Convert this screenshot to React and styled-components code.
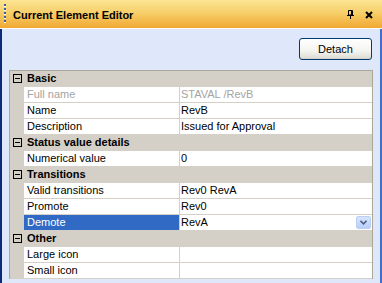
import React from 'react';
import styled, { createGlobalStyle } from 'styled-components';

const GlobalStyle = createGlobalStyle`
  html, body {
    margin: 0;
    padding: 0;
    background: #dfe8fb;
  }
  body {
    font-family: "Liberation Sans", Arial, sans-serif;
    font-size: 11px;
    color: #000;
  }
`;

const Window = styled.div`
  width: 382px;
  height: 283px;
  display: flex;
  flex-direction: column;
  overflow: hidden;
`;

const TitleBar = styled.div`
  height: 28px;
  flex: none;
  display: flex;
  align-items: center;
  background: linear-gradient(to bottom, #fbe594 0%, #f7cf6a 45%, #f1a832 100%);
  border-bottom: 1px solid #ffffff;
  padding: 0 9px 0 4px;
`;

const Grip = styled.div`
  width: 2px;
  height: 20px;
  margin-right: 7px;
  background: repeating-linear-gradient(
    to bottom,
    #3a5fa8 0px,
    #3a5fa8 2px,
    #ffffff 2px,
    #ffffff 3px,
    transparent 3px,
    transparent 4px
  );
`;

const Title = styled.div`
  flex: 1;
  font-weight: bold;
  font-size: 11px;
  padding-top: 1px;
`;

const TitleIcons = styled.div`
  display: flex;
  align-items: center;
  gap: 11px;
  padding-top: 1px;
`;

const Body = styled.div`
  flex: 1;
  background: #dfe8fb;
  border-left: 2px solid #0b2a78;
  border-right: 2px solid #3f6fc8;
  display: flex;
  flex-direction: column;
  padding: 9px 7px 0 7px;
`;

const Toolbar = styled.div`
  display: flex;
  justify-content: flex-end;
  padding-right: 1px;
  margin-bottom: 10px;
`;

const Button = styled.button`
  width: 73px;
  height: 22px;
  border: 1px solid #003c74;
  border-radius: 3px;
  background: linear-gradient(to bottom, #ffffff 0%, #f4f4f0 60%, #dcdad2 100%);
  font-family: "Liberation Sans", Arial, sans-serif;
  font-size: 11px;
  color: #000;
  padding: 0;
  box-shadow: inset 0 -1px 0 #d6d0c5;
`;

const Grid = styled.div`
  border: 1px solid #aca899;
  border-bottom: none;
  background: #d4d0c8;
`;

const Row = styled.div`
  display: grid;
  grid-template-columns: 14px 156px 1fr;
  height: 16px;
  box-sizing: border-box;
  border-bottom: 1px solid #d4d0c8;
  line-height: 15px;
`;

const Margin = styled.div`
  background: #d4d0c8;
  display: flex;
  align-items: center;
  justify-content: center;
`;

const Label = styled.div`
  background: ${p => (p.$selected ? '#316ac5' : '#ffffff')};
  color: ${p => (p.$selected ? '#ffffff' : p.$disabled ? '#a4a4a4' : '#000')};
  border-right: 1px solid #d4d0c8;
  padding-left: 3px;
  white-space: nowrap;
  overflow: hidden;
`;

const Value = styled.div`
  background: #ffffff;
  color: ${p => (p.$disabled ? '#a4a4a4' : '#000')};
  padding-left: 1px;
  display: flex;
  align-items: center;
  justify-content: space-between;
  white-space: nowrap;
`;

const Header = styled.div`
  display: grid;
  grid-template-columns: 14px 1fr;
  height: 16px;
  box-sizing: border-box;
  border-bottom: 1px solid #d4d0c8;
  background: #d4d0c8;
  font-weight: bold;
  line-height: 15px;
`;

const HeaderText = styled.div`
  padding-left: 3px;
`;

const MinusBox = styled.div`
  width: 7px;
  height: 7px;
  border: 1px solid #000;
  position: relative;
  &::after {
    content: '';
    position: absolute;
    left: 1px;
    right: 1px;
    top: 3px;
    height: 1px;
    background: #000;
  }
`;

const DropButton = styled.div`
  width: 15px;
  height: 13px;
  margin-right: 1px;
  border-radius: 2px;
  background: linear-gradient(to bottom, #d7e4fd 0%, #b9cffa 100%);
  border: 1px solid #bcd0f7;
  box-sizing: border-box;
  display: flex;
  align-items: center;
  justify-content: center;
`;

const PinIcon = () => (
  <svg width="7" height="9" viewBox="0 0 7 9">
    <path d="M1.5 0.5H5.5V5H1.5Z M4.5 1V5" fill="none" stroke="#000" strokeWidth="1" />
    <path d="M0 5.5H7" stroke="#000" strokeWidth="1" />
    <path d="M3.5 5.5V9" stroke="#000" strokeWidth="1" />
  </svg>
);

const CloseIcon = () => (
  <svg width="8" height="8" viewBox="0 0 8 8">
    <path d="M1 1L7 7M7 1L1 7" stroke="#000" strokeWidth="2" />
  </svg>
);

const Chevron = () => (
  <svg width="7" height="5" viewBox="0 0 7 5">
    <path d="M0.5 0.8L3.5 3.8L6.5 0.8" fill="none" stroke="#4d6185" strokeWidth="1.6" />
  </svg>
);

const sections = [
  {
    title: 'Basic',
    rows: [
      { label: 'Full name', value: 'STAVAL /RevB', disabled: true },
      { label: 'Name', value: 'RevB' },
      { label: 'Description', value: 'Issued for Approval' },
    ],
  },
  {
    title: 'Status value details',
    rows: [{ label: 'Numerical value', value: '0' }],
  },
  {
    title: 'Transitions',
    rows: [
      { label: 'Valid transitions', value: 'Rev0 RevA' },
      { label: 'Promote', value: 'Rev0' },
      { label: 'Demote', value: 'RevA', selected: true },
    ],
  },
  {
    title: 'Other',
    rows: [
      { label: 'Large icon', value: '' },
      { label: 'Small icon', value: '' },
    ],
  },
];

const App = () => {
  return (
    <Window>
      <GlobalStyle />
      <TitleBar>
        <Grip />
        <Title>Current Element Editor</Title>
        <TitleIcons>
          <PinIcon />
          <CloseIcon />
        </TitleIcons>
      </TitleBar>
      <Body>
        <Toolbar>
          <Button>Detach</Button>
        </Toolbar>
        <Grid>
          {sections.map(s => (
            <React.Fragment key={s.title}>
              <Header>
                <Margin>
                  <MinusBox />
                </Margin>
                <HeaderText>{s.title}</HeaderText>
              </Header>
              {s.rows.map(r => (
                <Row key={r.label}>
                  <Margin />
                  <Label $selected={r.selected} $disabled={r.disabled}>
                    {r.label}
                  </Label>
                  <Value $disabled={r.disabled}>
                    <span>{r.value}</span>
                    {r.selected && (
                      <DropButton>
                        <Chevron />
                      </DropButton>
                    )}
                  </Value>
                </Row>
              ))}
            </React.Fragment>
          ))}
        </Grid>
      </Body>
    </Window>
  );
};

export default App;
